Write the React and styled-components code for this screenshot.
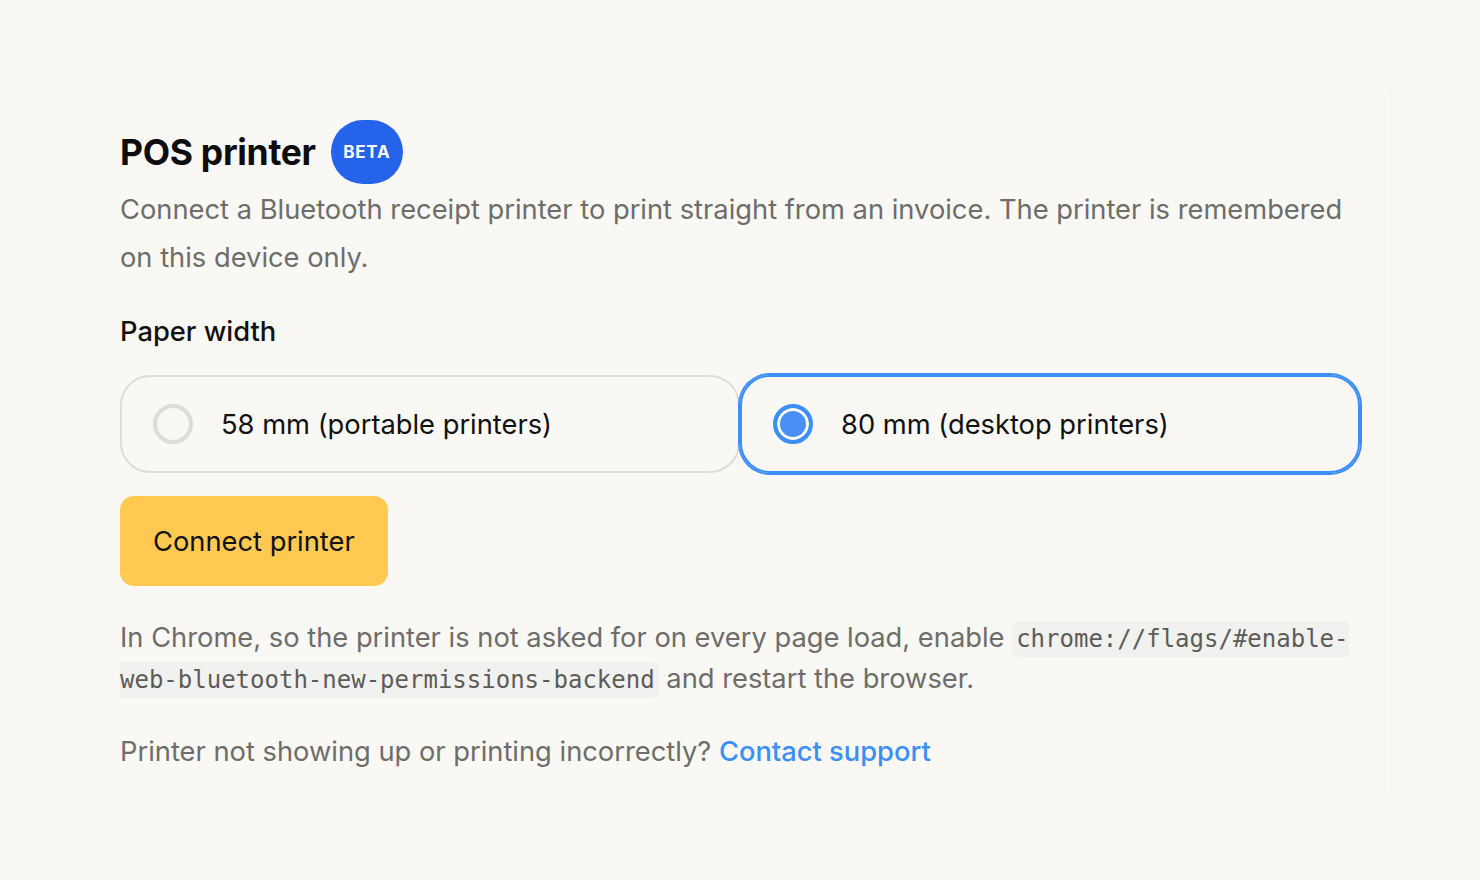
import React, { useState } from 'react'
import styled, { createGlobalStyle } from 'styled-components'

const GlobalStyle = createGlobalStyle`
  html, body {
    margin: 0;
    padding: 0;
    background: #f8f6f2;
    font-family: Inter, 'Noto Sans', sans-serif;
    -webkit-font-smoothing: antialiased;
  }
`

const widths = [
  { id: 58, label: '58 mm (portable printers)' },
  { id: 80, label: '80 mm (desktop printers)' },
]

export default function App() {
  const [paper, setPaper] = useState(80)

  return (
    <>
      <GlobalStyle />
      <Page>
        <Card>
          <Header>
            <Title>POS printer</Title>
            <Badge>BETA</Badge>
          </Header>
          <Lead>
            Connect a Bluetooth receipt printer to print straight from an invoice. The printer is
            remembered on this device only.
          </Lead>

          <Label>Paper width</Label>
          <Options>
            {widths.map((w) => (
              <Option key={w.id} $active={paper === w.id} onClick={() => setPaper(w.id)}>
                <Radio $active={paper === w.id} />
                <span>{w.label}</span>
              </Option>
            ))}
          </Options>

          <Button>Connect printer</Button>

          <Note>
            In Chrome, so the printer is not asked for on every page load, enable{' '}
            <Code>chrome://flags/#enable-web-bluetooth-new-permissions-backend</Code> and restart
            the browser.
          </Note>
          <Note>
            Printer not showing up or printing incorrectly? <Link href="#">Contact support</Link>
          </Note>
        </Card>
      </Page>
    </>
  )
}

const Page = styled.div`
  padding: 88px 90px 80px 88px;
`

const Card = styled.div`
  background: #f9f8f5;
  border-radius: 12px;
  padding: 32px 30px 25px 32px;
  display: flex;
  flex-direction: column;
`

const Header = styled.div`
  display: flex;
  align-items: center;
  gap: 15px;
  height: 64px;
`

const Title = styled.h1`
  margin: 0;
  font-size: 35.5px;
  font-weight: 700;
  color: #0d0d0d;
  letter-spacing: -0.3px;
`

const Badge = styled.span`
  display: inline-flex;
  align-items: center;
  justify-content: center;
  width: 72px;
  height: 64px;
  border-radius: 32px;
  background: #2563eb;
  color: #fff;
  font-size: 17px;
  font-weight: 700;
  letter-spacing: 0.8px;
`

const Lead = styled.p`
  margin: 2px 0 0;
  font-size: 27.3px;
  line-height: 48px;
  color: #6e6d6a;
`

const Label = styled.div`
  margin-top: 30px;
  font-size: 27.3px;
  line-height: 40px;
  font-weight: 500;
  color: #111;
`

const Options = styled.div`
  margin-top: 23px;
  display: grid;
  grid-template-columns: 1fr 1fr;
`

const Option = styled.label`
  display: flex;
  align-items: center;
  gap: 28px;
  height: 98px;
  box-sizing: border-box;
  padding: 0 31px;
  border-radius: 30px;
  border: 2px solid #dddcd8;
  font-size: 27.3px;
  color: #111;
  cursor: pointer;
  ${({ $active }) =>
    $active &&
    `
    border-color: #3b8ff6;
    box-shadow: 0 0 0 2px #3b8ff6;
  `}
`

const Radio = styled.span`
  flex: none;
  width: 40px;
  height: 40px;
  box-sizing: border-box;
  border-radius: 50%;
  border: 4px solid ${({ $active }) => ($active ? '#3b8ff6' : '#dddcd8')};
  background: ${({ $active }) => ($active ? '#4a8ff8' : 'transparent')};
  box-shadow: ${({ $active }) => ($active ? 'inset 0 0 0 3px #fff' : 'none')};
`

const Button = styled.button`
  align-self: flex-start;
  margin-top: 23px;
  height: 90px;
  padding: 0 33px;
  border: none;
  border-radius: 14px;
  background: #ffc952;
  color: #111;
  font-family: inherit;
  font-size: 27.3px;
  cursor: pointer;
`

const Note = styled.p`
  margin: 32px 0 0;
  font-size: 27.3px;
  line-height: 40px;
  color: #6e6d6a;
`

const Code = styled.code`
  font-family: 'DejaVu Sans Mono', 'Liberation Mono', monospace;
  font-size: 24px;
  color: #5c5b58;
  background: #f1f1ef;
  padding: 4px 4px;
  border-radius: 6px;
`

const Link = styled.a`
  color: #3b8ff6;
  font-weight: 500;
  text-decoration: none;
`
